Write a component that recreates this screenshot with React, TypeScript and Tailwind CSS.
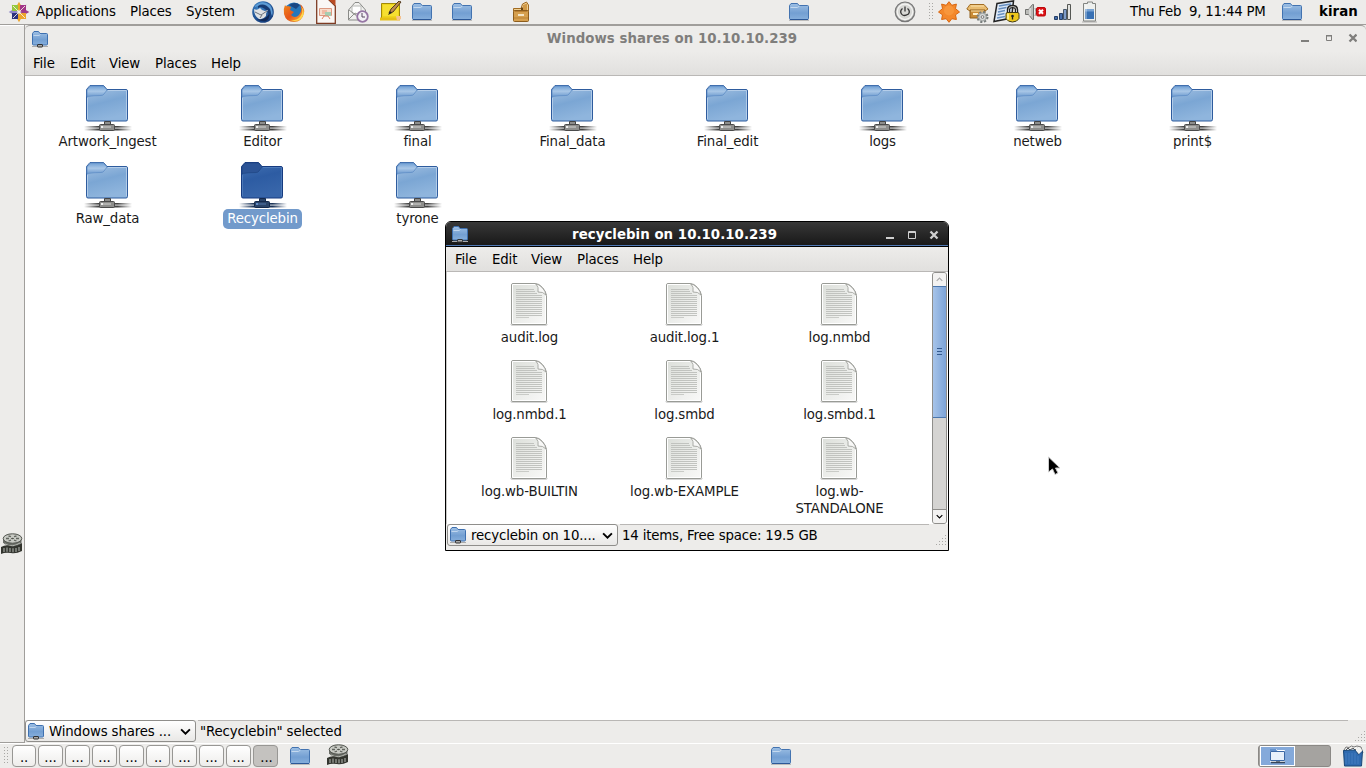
import React from "react";

type IconProps = { className?: string };

function Gradients() {
  return (
    <svg className="absolute h-0 w-0" aria-hidden="true">
      <defs>
        <linearGradient id="blue" x1="0" y1="0" x2="0.3" y2="1">
          <stop offset="0" stopColor="#a9c5e4" />
          <stop offset="0.55" stopColor="#7ba6d4" />
          <stop offset="1" stopColor="#8fb5dd" />
        </linearGradient>
        <linearGradient id="tab" x1="0" y1="0" x2="0" y2="1">
          <stop offset="0" stopColor="#6f9fd4" />
          <stop offset="0.5" stopColor="#a9c7e7" />
          <stop offset="1" stopColor="#6f9cd0" />
        </linearGradient>
        <linearGradient id="navy" x1="0" y1="0" x2="0.3" y2="1">
          <stop offset="0" stopColor="#4473b4" />
          <stop offset="0.5" stopColor="#2d5ca3" />
          <stop offset="1" stopColor="#3866aa" />
        </linearGradient>
        <linearGradient id="smallblue" x1="0" y1="0" x2="0" y2="1">
          <stop offset="0" stopColor="#9dbfe4" />
          <stop offset="0.6" stopColor="#739fd2" />
          <stop offset="1" stopColor="#86afdc" />
        </linearGradient>
        <linearGradient id="wire" x1="0" y1="0" x2="1" y2="0">
          <stop offset="0" stopColor="#444" stopOpacity="0" />
          <stop offset="0.3" stopColor="#444" />
          <stop offset="0.7" stopColor="#444" />
          <stop offset="1" stopColor="#444" stopOpacity="0" />
        </linearGradient>
        <linearGradient id="wirenavy" x1="0" y1="0" x2="1" y2="0">
          <stop offset="0" stopColor="#1d3558" stopOpacity="0" />
          <stop offset="0.3" stopColor="#1d3558" />
          <stop offset="0.7" stopColor="#1d3558" />
          <stop offset="1" stopColor="#1d3558" stopOpacity="0" />
        </linearGradient>
        <linearGradient id="paper" x1="0" y1="0" x2="1" y2="1">
          <stop offset="0" stopColor="#dcdfda" />
          <stop offset="1" stopColor="#f9f9f8" />
        </linearGradient>
        <radialGradient id="fox" cx="0.35" cy="0.25" r="0.8">
          <stop offset="0" stopColor="#3f86c8" />
          <stop offset="1" stopColor="#143c7c" />
        </radialGradient>
        <linearGradient id="flame" x1="0" y1="0" x2="1" y2="1">
          <stop offset="0" stopColor="#f08a1c" />
          <stop offset="0.5" stopColor="#e6551a" />
          <stop offset="1" stopColor="#ffc63a" />
        </linearGradient>
      </defs>
    </svg>
  );
}

function ShareIcon({ selected = false }: { selected?: boolean }) {
  const edge = selected ? "#163b80" : "#2e5c9e";
  const metal = selected ? "#2b4468" : "#8e8e8c";
  return (
    <svg viewBox="0 0 48 48" className="h-12 w-12 shrink-0">
      <path d="M2.500 9V5.500L6 1.500h13.500L23 5.500h19q1.500 0 1.500 1.500V35.500q0 1.500-1.500 1.500H4q-1.500 0-1.500-1.500z" fill={selected ? "url(#navy)" : "url(#blue)"} stroke={edge} />
      <path d="M3 9V6L6.300 2h13L23 6l-3 4q-1 1.500-3 1.500-7 0-14 1z" fill={selected ? "#2c5496" : "url(#tab)"} stroke={selected ? "#214785" : "#5f8ec6"} strokeWidth=".8" />
      <path d="M3.500 35V14M42.500 35V6.500H24" fill="none" stroke={selected ? "#5984c0" : "#c5d9ef"} opacity=".7" />
      <path d="M0 42h48v1.500H0zM0 45h48v1.500H0z" fill={selected ? "url(#wirenavy)" : "url(#wire)"} />
      <path d="M0 43.500h48V45H0z" fill={selected ? "url(#wirenavy)" : "url(#wire)"} opacity=".5" />
      <path d="M20.500 37.500h6v4h-6z" fill={metal} stroke={selected ? "#14294b" : "#444"} />
      <rect x="15.500" y="40.500" width="15" height="6" rx="1" fill={metal} stroke={selected ? "#14294b" : "#4b4b4b"} />
      <path d="M17 42h2v2h-2z" fill={selected ? "#668fc8" : "#eee"} />
      <path d="M19 42h8v2h-8z" fill={selected ? "#3f5e8a" : "#b2b2b0"} />
    </svg>
  );
}

function FileIcon() {
  return (
    <svg viewBox="0 0 40 46" className="h-[46px] w-10 shrink-0">
      <path d="M1 42h38l-1.500 2H2.500z" fill="#777" opacity=".3" />
      <path d="M2.500 3q0-1.500 1.500-1.500h22q4 0 7.500 4t4 8V41q0 1.500-1.500 1.500H4q-1.500 0-1.500-1.500z" fill="url(#paper)" stroke="#999b96" />
      <path d="M3.500 41.500V2.500H26M36.500 14v27.500h-33" fill="none" stroke="#fff" />
      <path d="M7 7h18M7 9h19M7 11h21M7 13h26M7 15h26M7 17h26M7 19h26M7 21h26M7 23h26M7 25h26M7 27h26M7 29h26M7 31h26M7 33h26" transform="translate(0 .5)" stroke="#c1c3bf" />
      <path d="M7 35.500h13" stroke="#c9cbc7" />
      <path d="M27 2q3 3 2 8 5-.5 8 3-.5-4-4-7.500T27 2z" fill="#f8f8f7" stroke="#9a9c97" strokeWidth=".8" />
    </svg>
  );
}

function Folder({ className = "" }: IconProps) {
  return (
    <svg viewBox="0 0 22 20" className={"h-5 w-[22px] shrink-0 " + className}>
      <path d="M1 18.500h20" stroke="#777" opacity=".4" />
      <path d="M1.500 15V3.500L3 1.500h6.500l1.500 2h8.500q1 0 1 1V16.500q0 1-1 1h-17q-1 0-1-1z" fill="url(#smallblue)" stroke="#4373b0" />
      <path d="M2.500 5.500h7L11.500 4" fill="none" stroke="#c4d9ef" />
      <path d="M2 17.500h18" stroke="#2c5897" />
    </svg>
  );
}

function MiniShare() {
  return (
    <svg viewBox="0 0 18 18" className="h-[18px] w-[18px] shrink-0">
      <path d="M1.500 14V3.500L3 1.500h4.500l1.500 2h6.500q1 0 1 1V14q0 1-1 1h-13q-1 0-1-1z" fill="url(#smallblue)" stroke="#3e70b0" />
      <path d="M2.500 5.500H8L9.500 4.500" fill="none" stroke="#bfd5ee" />
      <path d="M1 16.500h16" stroke="#aaa" />
      <rect x="6.500" y="14.500" width="5" height="2.500" rx=".5" fill="#aaa" stroke="#333" />
    </svg>
  );
}

function Distro() {
  const petals = [
    ["#e9a526", 0], ["#8f2476", 45], ["#9c3c8a", 90], ["#f0a020", 135],
    ["#eda42b", 180], ["#252f7c", 225], ["#8e86c8", 270], ["#94c83d", 315],
  ] as const;
  return (
    <svg viewBox="0 0 22 22" className="h-[22px] w-[22px]">
      {petals.map(([c, a]) => <path key={a} d="M11 10 8.300 5.500 11 .7l2.700 4.800z" fill={c} transform={`rotate(${a} 11 11)`} />)}
      <path d="M4 4h6v6H4z" fill="#94c83d" /><path d="M12 4h6v6h-6z" fill="#a13588" />
      <path d="M4 12h6v6H4z" fill="#2c3280" /><path d="M12 12h6v6h-6z" fill="#eca42b" />
      <path d="M5 5l12 12M17 5 5 17" stroke="#f5eddf" strokeWidth=".9" />
    </svg>
  );
}

function Thunderbird() {
  return (
    <svg viewBox="0 0 24 24" className="h-6 w-6">
      <circle cx="12" cy="12" r="10.800" fill="url(#fox)" />
      <path d="M4 6Q11-1 19 5q4 5 2 11-2-8-8-10-5-1-9 1z" fill="#5d9cd5" />
      <path d="M7 6q6-4 12 3 2 5-1 8 0-5-4-8-4-3-7-1z" fill="#173b72" />
      <path d="M3 9q3 2 6-1 2 3 5 3l3-1q-2 2-2 6-3 4-7 3-5-3-5-10z" fill="#dfe2e5" />
      <path d="m4 12 6 3 6-4M9 18l2-3" stroke="#6d737c" fill="none" />
      <path d="M6 19q8 2 12-5 1 5-3 7-5 1-9-2z" fill="#112957" />
    </svg>
  );
}

function Firefox() {
  return (
    <svg viewBox="0 0 22 22" className="h-[22px] w-[22px]">
      <circle cx="11" cy="11" r="9.500" fill="#2577ba" />
      <path d="M6 4q6-4 11 0l-4 4z" fill="#194783" />
      <path d="M2 4q1 2 3 1l3 1-1 3 4 2-3 3q4 4 8 0 4-5 1-11 5 4 4 9-2 9-10 9T1 13Q0 8 2 4z" fill="url(#flame)" />
      <path d="M18 5q3 6-1 11-4 4-10 3 9 3 13-4 2-5-2-10z" fill="#ffd54a" />
    </svg>
  );
}

function Impress() {
  return (
    <svg viewBox="0 0 20 24" className="h-6 w-5">
      <path d="M.7-1H12l7.300 7v17.300H.7z" fill="#faf7f5" stroke="#7d3a22" strokeWidth="1.300" />
      <path d="M12-1h7.500v7z" fill="#ba4c24" />
      <path d="M3.500 8.500h12v7h-12z" fill="#f8dccb" stroke="#dc9880" />
      <path d="M6 11h5M6 13h3" stroke="#e9987d" /><path d="M9 12h6v4H9z" fill="#a6cdb1" />
      <path d="m6 19 2-3h4l2 3" fill="none" stroke="#de8060" />
    </svg>
  );
}

function MailClock() {
  return (
    <svg viewBox="0 0 22 22" className="h-[22px] w-[22px]">
      <path d="M1.500 9 8 1.500h4L18.500 9v10h-17z" fill="#f0f0ee" stroke="#8a8b88" />
      <path d="M5 5h9v7l-4 3-5-3z" fill="#fff" stroke="#b8b9b6" />
      <path d="m2 18 6-6 4 2 6 4M2 9l7 5" fill="none" stroke="#8f908c" />
      <circle cx="15.500" cy="15.500" r="5.300" fill="#f3f0f5" stroke="#9676a4" strokeWidth="1.800" />
      <path d="M15 12v4h3" fill="none" stroke="#55475d" />
    </svg>
  );
}

function Notes() {
  return (
    <svg viewBox="0 0 23 22" className="h-[22px] w-[23px]">
      <path d="M2.500 2.500h18v16h-18z" fill="#efd51b" stroke="#a28907" />
      <path d="M4 4h15v11H4z" fill="#f6df31" /><path d="M1 16.500h20v3H1z" fill="#e6c018" />
      <path d="M17 15h5v3l-4 2z" fill="#f6c28f" />
      <path d="m10 12 2-4 8-8 2 1-8 10z" fill="#bd8b4d" stroke="#533a20" />
      <path d="m9 14 2-4 2 2z" fill="#222" />
    </svg>
  );
}

function Crate() {
  return (
    <svg viewBox="0 0 18 22" className="h-[22px] w-[18px]">
      <path d="M1.500 9V7.500H9L10.500 3l4-2 2 3v6h-15z" fill="#efcf92" stroke="#a16b22" />
      <path d="M9 6.500h2V11H9z" fill="#6d4512" /><path d="m11 4 4-1.500v7h-4z" fill="#d19a48" />
      <rect x="1.500" y="9.500" width="15" height="11" rx="1" fill="#d6a04f" stroke="#8d5d1d" />
      <path d="M2.500 10.500h13M2 17h14" stroke="#bb8134" /><path d="M6 13h6v2H6z" fill="#f4e5c6" />
    </svg>
  );
}

function Power() {
  return (
    <svg viewBox="0 0 22 22" className="h-[22px] w-[22px]">
      <circle cx="11" cy="10.800" r="9.800" fill="#bfbfbd" stroke="#777" strokeWidth="1.200" />
      <circle cx="11" cy="10.800" r="7.800" fill="#d8d8d5" stroke="#f4f4f2" strokeWidth="1.300" />
      <path d="M11 5.500v5M8.500 7.500Q5.500 10 7.500 13t7 0q2-3-1-5.500" fill="none" stroke="#333" strokeWidth="1.300" />
    </svg>
  );
}

function Sunburst() {
  return (
    <svg viewBox="0 0 22 22" className="h-[22px] w-[22px]">
      <path d="m11 .7 2.800 3.600 4.600-1.200-.900 4.500L21.500 11l-4 2.800.9 4.700-4.600-.8L11 21.300l-2.800-3.600-4.600.8.900-4.700L.5 11l4-3.400-.9-4.500 4.600 1.200z" fill="#f4882b" stroke="#d9660f" />
      <circle cx="11" cy="9.500" r="5" fill="#f99c43" opacity=".7" />
    </svg>
  );
}

function Package() {
  return (
    <svg viewBox="0 0 24 24" className="h-6 w-6">
      <path d="M4 4.500h14l4 4.500-3 2H4L.8 9z" fill="#e9bc70" stroke="#a16d24" /><path d="M4 10h15v8H4z" fill="#c98b36" stroke="#90601d" />
      <path d="M5 6h13M5 11h13" stroke="#fae1a9" /><path d="M7 14h5" stroke="#fff1cb" strokeWidth="2" />
      <circle cx="16.500" cy="17" r="4.800" fill="#c6c9c8" stroke="#777c7b" strokeWidth="2.400" strokeDasharray="2 1.770" />
      <circle cx="16.500" cy="17" r="3.700" fill="#d7dad9" stroke="#a0a4a2" /><circle cx="16.500" cy="17" r="1.400" fill="#eee" stroke="#777" />
    </svg>
  );
}

function ScreenLock() {
  return (
    <svg viewBox="0 0 27 24" className="h-6 w-[27px]">
      <path d="M4 3.500 20.500 1l-2 17-17.500 3.500z" fill="#dce8f7" stroke="#222" strokeWidth="1.500" />
      <path d="m6 6 12-2M5.500 9l8-1.500M5 12l7-1.500M4.500 15l7-1.500M4 18l8-1.500" stroke="#668ebf" strokeWidth="1.300" />
      <path d="M15.500 13V9.500q0-3 4-3t4 3V13" fill="none" stroke="#222" strokeWidth="3.400" />
      <path d="M15.500 13V9.500q0-3 4-3t4 3V13" fill="none" stroke="#c7c8c4" />
      <path d="M14 12.500h11q1 0 1 2v4q-2 3.500-6.500 3.500T13 18.500v-4q0-2 1-2z" fill="#edc71c" stroke="#423a12" />
      <path d="M15 13.500v6" stroke="#fbe98a" strokeWidth="2" />
      <circle cx="19.500" cy="16" r="1.300" fill="#222" /><path d="M19.500 16v3.500" stroke="#222" strokeWidth="1.300" />
    </svg>
  );
}

function Muted() {
  return (
    <svg viewBox="0 0 22 20" className="h-5 w-[22px]">
      <path d="M1.500 7.500h3l4-5h1v15h-1l-4-5h-3z" fill="#babbb8" stroke="#70716e" />
      <path d="M6 6v8" stroke="#eee" /><path d="M11 6q2 4 0 8" fill="none" stroke="#999" />
      <rect x="12.500" y="5.500" width="9" height="8.500" rx="1.500" fill="#dc1115" stroke="#bc090d" />
      <path d="m15 7.800 4 4m0-4-4 4" stroke="#fff" strokeWidth="2" />
    </svg>
  );
}

function Signal() {
  return (
    <svg viewBox="0 0 18 18" className="h-[18px] w-[18px]">
      <path d="M.5 13.500h3v3h-3zM5.500 10.500h3v6h-3z" fill="#446dac" stroke="#253f67" />
      <path d="M9.500 6.500h3v10h-3z" fill="#7e9dca" stroke="#465667" />
      <path d="M13.500 1.500h3v15h-3z" fill="#e1e2df" stroke="#555753" />
    </svg>
  );
}

function Battery() {
  return (
    <svg viewBox="0 0 16 22" className="h-[22px] w-4">
      <path d="M5.500 2.500V1h5v1.500h3v17.500h-12V2.500z" fill="#eef0ee" stroke="#828481" />
      <path d="M3 8h9v10H3z" fill="#3971b4" /><path d="M3 8h9v2.500H3z" fill="#78a3d3" /><path d="M3 4h2v14H3z" fill="#fff" opacity=".3" />
      <path d="M0 21h15" stroke="#555" opacity=".4" />
    </svg>
  );
}

function FilmReel() {
  return (
    <svg viewBox="0 0 24 22" className="h-[22px] w-6">
      <path d="M3 5.500v4q3 4 9.500 4t9-4v-4z" fill="#6b6e68" />
      <path d="M5 11q7 4 15-1" stroke="#b6b9b2" fill="none" />
      <ellipse cx="12.500" cy="5.500" rx="9.300" ry="4.700" fill="#c9cbc5" stroke="#50534d" />
      <ellipse cx="12.500" cy="5.500" rx="1.500" ry=".8" fill="#50534d" />
      <path d="M6 5.500h3M16 5.500h3M8.500 3l2.500.7M14 3.700l2.500-.7M8.500 8l2.500-.8M14 7.200l2.500.8" stroke="#62655f" strokeWidth="1.300" />
      <path d="M1 14q5-3 10-1 5 1 11-3v8q-6 3-11 2-6-1-10 1z" fill="#33352f" />
      <path d="M4 15v4M7 14.500v4.300M10 15v4M13 15.300v4M16 15v4M19 14v4" stroke="#81847e" strokeWidth="1.700" />
    </svg>
  );
}

function Trash() {
  return (
    <svg viewBox="0 0 22 22" className="h-[22px] w-[22px]">
      <path d="m2 5 2-3 3 .5L9.500 1l2.500 1 3-1 4 1 2 6H2z" fill="#f4f4f2" stroke="#777" />
      <path d="m4 5 2-2 2 2 3-2 2 2 3-2" fill="none" stroke="#555" />
      <path d="M1.500 5.500 13 5l3.500 4.500L20.500 6l-1 15H2.500z" fill="#2f6bb0" stroke="#194878" />
      <path d="M4 8v11M7 8v11M10 8v11M13 8v11M16 11v8" stroke="#447fc1" />
      <path d="m14 5 3 4 3-3-1-3h-5z" fill="#f1f2f1" />
    </svg>
  );
}

function Chevron({ up = false, className = "" }: { up?: boolean; className?: string }) {
  return (
    <svg viewBox="0 0 10 6" className={"shrink-0 " + className}>
      <path d={up ? "M1 5l4-4 4 4" : "M1 1l4 4 4-4"} fill="none" stroke="currentColor" strokeWidth="1.700" />
    </svg>
  );
}

function WindowButtons({ small = false }: { small?: boolean }) {
  return small ? (
    <svg viewBox="0 0 56 12" className="mb-px h-3 w-14 shrink-0">
      <path d="M0 8h8v2H0z" fill="currentColor" />
      <path d="M25.500 4h5v4.500h-5zM25 3.500h6" fill="none" stroke="currentColor" />
      <path d="m48.500 2.500 7 7M55.500 2.500l-7 7" stroke="currentColor" strokeWidth="2.300" />
    </svg>
  ) : (
    <svg viewBox="0 0 56 12" className="h-3 w-14 shrink-0">
      <path d="M2 9h8v2H2z" fill="currentColor" />
      <path d="M24.500 3.500h7v7h-7zM24 4.500h8" fill="none" stroke="currentColor" />
      <path d="m46.500 3.500 7 7M53.500 3.500l-7 7" stroke="currentColor" strokeWidth="2.300" />
    </svg>
  );
}

function Grip() {
  return (
    <svg viewBox="0 0 12 12" className="h-3 w-3 shrink-0">
      {[0, 1, 2, 3].flatMap((r) => Array.from({ length: r + 1 }, (_, i) => (
        <rect key={`${r}-${i}`} x={10 - i * 3} y={1 + r * 3} width="1" height="1" fill="#aaa9a6" />
      )))}
    </svg>
  );
}

function PanelGrip() {
  return (
    <svg viewBox="0 0 5 18" className="h-[18px] w-[5px] shrink-0">
      {[0, 1, 2, 3, 4, 5].flatMap((r) => [0, 3].map((x) => (
        <rect key={`${r}-${x}`} x={x} y={r * 3} width="1" height="1" fill="#a8a7a4" />
      )))}
    </svg>
  );
}

function Menu({ className }: IconProps) {
  return (
    <div className={"flex h-[25px] shrink-0 items-center border-b border-[#bab8b6] bg-linear-to-b from-[#edecea] to-[#e1e0de] " + className}>
      <span className="w-[37px]">File</span>
      <span className="w-[39px]">Edit</span>
      <span className="w-[46px]">View</span>
      <span className="w-[56px]">Places</span>
      <span>Help</span>
    </div>
  );
}

function Cell({ x, children }: { x: string; children?: React.ReactNode }) {
  return <div className={"flex h-6 shrink-0 items-center whitespace-pre " + x}>{children}</div>;
}

function TopPanel() {
  return (
    <header className="flex h-[25px] shrink-0 border-b border-[#a09e9b] pl-2">
      <Cell x="w-7"><Distro /></Cell>
      <Cell x="w-[94px] pb-[2px]">Applications</Cell>
      <Cell x="w-14 pb-[2px]">Places</Cell>
      <Cell x="w-[65px] pb-[2px]">System</Cell>
      <Cell x="w-[32px]"><Thunderbird /></Cell>
      <Cell x="w-[33px]"><Firefox /></Cell>
      <Cell x="w-[31px]"><Impress /></Cell>
      <Cell x="w-8"><MailClock /></Cell>
      <Cell x="w-8"><Notes /></Cell>
      <Cell x="w-10"><Folder /></Cell>
      <Cell x="w-[61px]"><Folder /></Cell>
      <Cell x="w-[276px]"><Crate /></Cell>
      <Cell x="w-[106px]"><Folder /></Cell>
      <Cell x="w-[35px]"><Power /></Cell>
      <Cell x="w-[9px]"><PanelGrip /></Cell>
      <Cell x="w-[28px]"><Sunburst /></Cell>
      <Cell x="w-[27px]"><Package /></Cell>
      <Cell x="w-[31px]"><ScreenLock /></Cell>
      <Cell x="w-[30px]"><Muted /></Cell>
      <Cell x="w-[28px]"><Signal /></Cell>
      <Cell x="w-[48px]"><Battery /></Cell>
      <Cell x="w-[151px] pb-[2px] tracking-[-0.25px]">Thu Feb  9, 11:44 PM</Cell>
      <Cell x="w-[38px]"><Folder /></Cell>
      <Cell x="pb-[2px] font-bold tracking-[0.05px]">kiran</Cell>
    </header>
  );
}

const shares = ["Artwork_Ingest", "Editor", "final", "Final_data", "Final_edit", "logs", "netweb", "print$", "Raw_data", "Recyclebin", "tyrone"];
const files = ["audit.log", "audit.log.1", "log.nmbd", "log.nmbd.1", "log.smbd", "log.smbd.1", "log.wb-BUILTIN", "log.wb-EXAMPLE", "log.wb-\nSTANDALONE"];

function LocationButton({ label, className }: { label: string; className: string }) {
  return (
    <button className={"flex h-[22px] shrink-0 items-center rounded-[3px] border border-[#8f8e8b] bg-linear-to-b from-white to-[#e9e8e6] pl-[1px] " + className}>
      <MiniShare />
      <span className="ml-[4px] flex-1 text-left whitespace-nowrap">{label}</span>
      <Chevron className="mr-[4px] h-[7px] w-[11px]" />
    </button>
  );
}

function SharesWindow() {
  return (
    <section className="flex min-w-0 flex-1 flex-col border-l border-[#a09e9b]">
      <div className="flex h-[26px] shrink-0 items-center rounded-t-[5px] border-t border-[#a09e9b] pr-[9px] pl-[6px] text-[#7f7e7c]">
        <MiniShare />
        <span className="flex-1 pr-[6px] text-center font-bold tracking-[0.05px]">Windows shares on 10.10.10.239</span>
        <WindowButtons small />
      </div>
      <Menu className="pl-[8px]" />
      <div className="grid min-h-0 flex-1 auto-rows-[77px] grid-cols-[repeat(8,155px)] content-start bg-white pt-2 pl-[5px]">
        {shares.map((name) => {
          const selected = name === "Recyclebin";
          return (
            <div key={name} className="flex flex-col items-center text-[#1a1a1a]">
              <ShareIcon selected={selected} />
              <span className={selected ? "h-5 rounded-[5px] bg-[#729acb] px-[4px] leading-[19px] text-white" : "h-5 px-[4px] leading-[19px]"}>{name}</span>
            </div>
          );
        })}
      </div>
      <div className="flex h-[23px] shrink-0">
        <LocationButton label="Windows shares ..." className="w-[171px]" />
        <div className="ml-[2px] flex h-[22px] flex-1 items-center border-t border-[#b9b7b5] pl-[2px]">"Recyclebin" selected</div>
        <div className="flex w-[18px] items-end justify-end pb-px"><Grip /></div>
      </div>
    </section>
  );
}

function RecycleWindow() {
  return (
    <section className="absolute top-[221px] left-[445px] flex h-[330px] w-[504px] flex-col overflow-hidden rounded-t-[6px] border border-black bg-[#edecea]">
      <div className="flex h-[25px] shrink-0 items-center border-b border-black bg-linear-to-b from-[#383838] to-[#181818] pr-[8px] pl-[5px] text-white shadow-[inset_0_-1px_0_#4f78b3]">
        <MiniShare />
        <span className="flex-1 pr-[4px] text-center font-bold tracking-[0.04px]">recyclebin on 10.10.10.239</span>
        <span className="flex text-[#cfcfcf]"><WindowButtons /></span>
      </div>
      <Menu className="pl-[9px]" />
      <div className="flex h-[252px] shrink-0 bg-white">
        <div className="grid w-[486px] auto-rows-[77px] grid-cols-[repeat(3,155px)] content-start overflow-hidden border-l border-[#c9c8c6] pt-[10px] pl-[4px]">
          {files.map((name) => (
            <div key={name} className="flex flex-col items-center text-[#1a1a1a]">
              <FileIcon />
              <span className="ml-[2px] pt-px text-center leading-[17px] whitespace-pre">{name}</span>
            </div>
          ))}
        </div>
        <div className="flex w-[15px] flex-col overflow-hidden rounded-[3px] border border-[#8f8e8b] bg-[#d5d4d2]">
          <div className="flex h-[13px] shrink-0 items-center justify-center bg-[#f3f2f1] text-[#aaa]"><Chevron up className="h-[5px] w-[7px]" /></div>
          <div className="-mx-px flex h-[132px] shrink-0 flex-col items-center justify-center gap-[2px] border border-[#4a76ad] bg-linear-to-r from-[#a7c4e9] to-[#7ca3d7] pb-[2px]">
            <i className="h-px w-[5px] bg-[#33598d]" /><i className="h-px w-[5px] bg-[#33598d]" /><i className="h-px w-[5px] bg-[#33598d]" />
          </div>
          <div className="flex-1" />
          <div className="flex h-[14px] shrink-0 items-center justify-center border-t border-[#8f8e8b] bg-[#f3f2f1]"><Chevron className="h-[5px] w-[7px]" /></div>
        </div>
      </div>
      <div className="flex h-[26px] shrink-0 pl-px">
        <LocationButton label="recyclebin on 10...." className="w-[171px]" />
        <div className="ml-[2px] flex h-[22px] w-[309px] items-center border-t border-[#b9b7b5] pl-[2px] tracking-[-0.17px]">14 items, Free space: 19.5 GB</div>
        <div className="flex flex-1 items-end justify-end pr-px pb-[4px]"><Grip /></div>
      </div>
    </section>
  );
}

function TaskBar() {
  const tasks = [true, false, false, false, false, true, false, false, false, false];
  return (
    <footer className="flex h-[25px] shrink-0 items-center border-t border-white pl-1">
      <PanelGrip />
      <div className="ml-[3px] flex gap-[2px]">
        {tasks.map((narrow, i) => (
          <button
            key={i}
            className={
              (narrow ? "w-6 " : "w-[25px] ") +
              "flex h-[22px] items-center justify-center overflow-hidden rounded-[4px] border border-[#989794] " +
              (i === 9 ? "bg-[#c4c2bf] pt-[3px] pl-[2px]" : "bg-linear-to-b from-white to-[#eeedeb] pt-[2px]")
            }
          >
            {narrow ? ".." : "..."}
          </button>
        ))}
      </div>
      <div className="ml-[11px] w-[37px]"><Folder /></div>
      <div className="pb-[2px]"><FilmReel /></div>
      <div className="ml-[420px]"><Folder /></div>
      <div className="ml-[466px] flex h-[22px] w-[73px] rounded-[3px] border border-[#8b8986] bg-[#a5a3a0]">
        <div className="ml-px flex w-[35px] items-center justify-center border border-white bg-[#84a9da]">
          <svg viewBox="0 0 18 16" className="h-4 w-[18px]">
            <path d="M1.500 1.500h6l1 1h7v11h-14z" fill="#dbe7f6" stroke="#fff" /><path d="M1 1h6l1 2H1z" fill="#6592cb" />
            <path d="M1.500 3.500h14v9h-14z" fill="#e8f0fa" stroke="#3c68a5" /><path d="M2 14.500h14M7 14h4" stroke="#374559" strokeWidth="1.500" />
          </svg>
        </div>
      </div>
      <div className="ml-[11px]"><Trash /></div>
    </footer>
  );
}

export default function App() {
  return (
    <main className="relative flex h-[768px] w-[1366px] flex-col overflow-hidden bg-[#edecea] font-['DejaVu_Sans',sans-serif] text-[13.333px] leading-[17px] tracking-[-0.14px] text-black">
      <Gradients />
      <TopPanel />
      <div className="flex min-h-0 flex-1">
        <aside className="w-6 shrink-0 border-t border-b border-t-white border-b-[#a09e9b] pt-[507px]"><FilmReel /></aside>
        <SharesWindow />
      </div>
      <TaskBar />
      <RecycleWindow />
      <svg viewBox="0 0 14 22" className="absolute top-[456px] left-[1047px] h-[22px] w-[14px]">
        <path d="M1.500 1v15l4-3 2.500 5.500 3-1.500-2.500-5h4.500z" fill="#000" stroke="#ccc" />
      </svg>
    </main>
  );
}
